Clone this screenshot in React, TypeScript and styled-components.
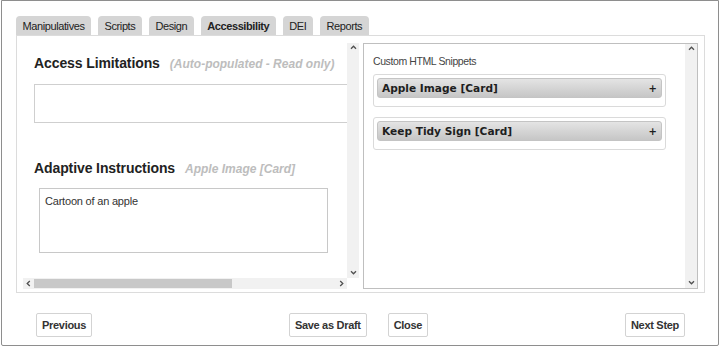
import React, { FC } from "react";
import styled, { createGlobalStyle } from "styled-components";

const tabs = ["Manipulatives", "Scripts", "Design", "Accessibility", "DEI", "Reports"];
const snippets = ["Apple Image [Card]", "Keep Tidy Sign [Card]"];

const Chevron: FC<{ dir: "up" | "down" | "left" | "right" }> = ({ dir }) => {
  const rot = { up: 0, right: 90, down: 180, left: 270 }[dir];
  return (
    <svg width="7" height="7" viewBox="0 0 7 7" style={{ transform: `rotate(${rot}deg)` }}>
      <polyline points="1,4.8 3.5,2.2 6,4.8" fill="none" stroke="#505050" strokeWidth="1.3" />
    </svg>
  );
};

const App: FC = () => {
  return (
    <>
      <GlobalStyle />
      <Dialog>
        <TabBar>
          {tabs.map((t) => (
            <Tab key={t} $active={t === "Accessibility"}>
              {t}
            </Tab>
          ))}
        </TabBar>
        <Panel>
          <LeftPane>
            <LeftBody>
              <SectionHead>
                <SectionTitle>Access Limitations</SectionTitle>
                <SectionNote>(Auto-populated - Read only)</SectionNote>
              </SectionHead>
              <ReadOnlyBox />
              <SectionHead $spaced>
                <SectionTitle>Adaptive Instructions</SectionTitle>
                <SectionNote>Apple Image [Card]</SectionNote>
              </SectionHead>
              <TextBox>Cartoon of an apple</TextBox>
            </LeftBody>
            <VScroll>
              <Chevron dir="up" />
              <Chevron dir="down" />
            </VScroll>
            <HScroll>
              <Chevron dir="left" />
              <HTrack>
                <HThumb />
              </HTrack>
              <Chevron dir="right" />
            </HScroll>
            <Corner />
          </LeftPane>
          <RightPane>
            <RightBody>
              <SnippetLabel>Custom HTML Snippets</SnippetLabel>
              <SnippetList>
                {snippets.map((s) => (
                  <SnippetCard key={s}>
                    <SnippetHeader>
                      <span>{s}</span>
                      <Plus>+</Plus>
                    </SnippetHeader>
                  </SnippetCard>
                ))}
              </SnippetList>
            </RightBody>
            <VScroll>
              <Chevron dir="up" />
              <Chevron dir="down" />
            </VScroll>
          </RightPane>
        </Panel>
        <Footer>
          <Button>Previous</Button>
          <ButtonGroup>
            <Button>Save as Draft</Button>
            <Button>Close</Button>
          </ButtonGroup>
          <Button>Next Step</Button>
        </Footer>
      </Dialog>
    </>
  );
};

export default App;

const GlobalStyle = createGlobalStyle`
  body {
    margin: 0;
    background: #fff;
    font-family: "Liberation Sans", Arial, sans-serif;
  }
  * { box-sizing: border-box; }
`;

const Dialog = styled.div`
  width: 718px;
  height: 346px;
  margin-left: 1px;
  border: 1px solid #8e8e8e;
  border-radius: 0 0 2px 2px;
  padding: 15px 0 0 14px;
  display: flex;
  flex-direction: column;
`;

const TabBar = styled.div`
  display: flex;
  gap: 7px;
  height: 19px;
`;

const Tab = styled.div<{ $active?: boolean }>`
  display: flex;
  align-items: center;
  padding: 0 6.5px;
  background: #d5d5d5;
  border-radius: 4px 4px 0 0;
  font-size: 11px;
  letter-spacing: -0.4px;
  color: #222;
  font-weight: ${(p) => (p.$active ? "bold" : "normal")};
`;

const Panel = styled.div`
  width: 689px;
  height: 258px;
  border: 1px solid #dcdcdc;
  padding: 7px 6px 3px 6px;
  display: grid;
  grid-template-columns: 336px 335px;
  gap: 4px;
`;

const LeftPane = styled.div`
  display: grid;
  grid-template-columns: 1fr 12px;
  grid-template-rows: 1fr 11px;
  overflow: hidden;
`;

const LeftBody = styled.div`
  overflow: hidden;
  padding: 11px 0 0 11px;
`;

const SectionHead = styled.div<{ $spaced?: boolean }>`
  display: flex;
  align-items: baseline;
  gap: 10px;
  line-height: 18px;
  margin-top: ${(p) => (p.$spaced ? "36px" : "0")};
  white-space: nowrap;
`;

const SectionTitle = styled.span`
  font-size: 14px;
  font-weight: bold;
  letter-spacing: -0.1px;
  color: #222;
`;

const SectionNote = styled.span`
  font-size: 12px;
  font-weight: bold;
  font-style: italic;
  color: #bdbdbd;
`;

const ReadOnlyBox = styled.div`
  width: 340px;
  height: 39px;
  margin-top: 11px;
  border: 1px solid #cfcfcf;
`;

const TextBox = styled.div`
  width: 289px;
  height: 65px;
  margin: 10px 0 0 5px;
  border: 1px solid #c8c8c8;
  padding: 6px 5px;
  font-size: 11px;
  letter-spacing: -0.2px;
  color: #333;
`;

const VScroll = styled.div`
  background: #f1f1f1;
  display: flex;
  flex-direction: column;
  justify-content: space-between;
  align-items: center;
  padding: 1px 0 2px;
`;

const HScroll = styled.div`
  background: #f1f1f1;
  display: flex;
  align-items: center;
  padding: 0 2px 0 2px;
  gap: 2px;
`;

const HTrack = styled.div`
  flex: 1;
  height: 100%;
  display: flex;
  align-items: center;
`;

const HThumb = styled.div`
  width: 198px;
  height: 9px;
  background: #c8c8c8;
`;

const Corner = styled.div`
  background: #fff;
`;

const RightPane = styled.div`
  border: 1px solid #bfbfbf;
  display: grid;
  grid-template-columns: 1fr 12px;
  overflow: hidden;
`;

const RightBody = styled.div`
  padding: 11px 0 0 9px;
`;

const SnippetLabel = styled.div`
  font-size: 10.5px;
  letter-spacing: -0.4px;
  line-height: 13px;
  color: #444;
`;

const SnippetList = styled.div`
  display: flex;
  flex-direction: column;
  gap: 10px;
  margin-top: 6px;
  width: 293px;
`;

const SnippetCard = styled.div`
  border: 1px solid #dadada;
  border-radius: 3px;
  padding: 3px 3px 8px 3px;
`;

const SnippetHeader = styled.div`
  height: 20px;
  display: flex;
  align-items: center;
  justify-content: space-between;
  padding: 0 4px;
  border: 1px solid #c4c4c4;
  border-radius: 3px;
  background: linear-gradient(#e4e4e4, #c6c6c6);
  font-family: "DejaVu Sans", Verdana, sans-serif;
  font-size: 10.6px;
  font-weight: bold;
  color: #1e1e1e;
`;

const Plus = styled.span`
  font-size: 10px;
`;

const Footer = styled.div`
  width: 689px;
  margin-top: 20px;
  padding: 0 20px;
  display: flex;
  justify-content: space-between;
  align-items: center;
`;

const ButtonGroup = styled.div`
  display: flex;
  gap: 21px;
`;

const Button = styled.button`
  height: 24px;
  padding: 0 5px;
  background: #fff;
  border: 1px solid #d3d3d3;
  border-radius: 2px;
  font-family: "Liberation Sans", Arial, sans-serif;
  font-size: 11px;
  font-weight: bold;
  letter-spacing: -0.3px;
  color: #333;
`;
